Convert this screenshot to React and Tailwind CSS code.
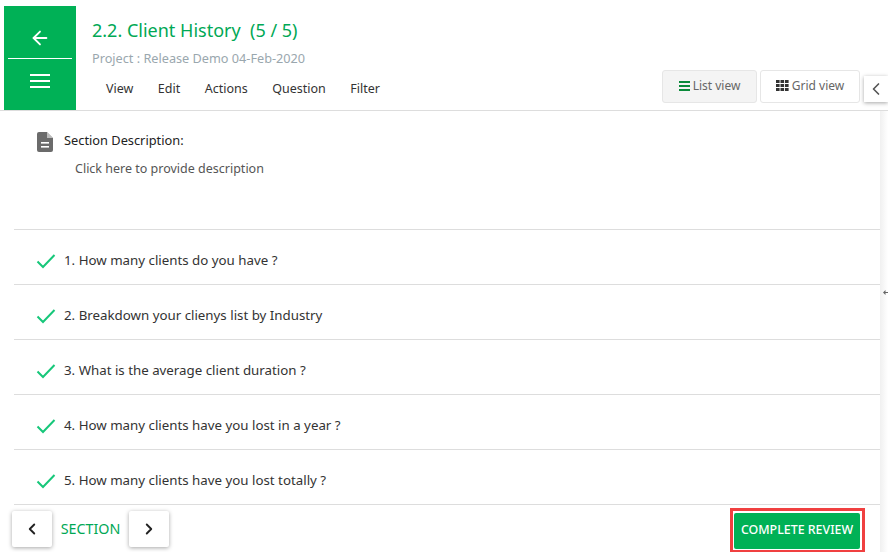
import React from 'react';
import { ArrowLeft, ChevronLeft, ChevronRight } from 'lucide-react';

const menus = ['View', 'Edit', 'Actions', 'Question', 'Filter'];
const questions = [
  '1. How many clients do you have ?',
  '2. Breakdown your clienys list by Industry',
  '3. What is the average client duration ?',
  '4. How many clients have you lost in a year ?',
  '5. How many clients have you lost totally ?',
];

function DocIcon() {
  return (
    <svg width="16" height="20" viewBox="0 0 16 20" className="mt-[2px]">
      <path d="M2 0h8l6 6v12a2 2 0 0 1-2 2H2a2 2 0 0 1-2-2V2a2 2 0 0 1 2-2z" fill="#6b6b6b" />
      <path d="M10 0v6h6z" fill="#fff" opacity="0.55" />
      <rect x="4" y="10" width="8" height="1.6" fill="#fff" />
      <rect x="4" y="14" width="8" height="1.6" fill="#fff" />
    </svg>
  );
}

function Bars({ w, h, t, color }) {
  return (
    <span className="flex flex-col justify-between" style={{ width: w, height: h }}>
      <span style={{ height: t, background: color }} />
      <span style={{ height: t, background: color }} />
      <span style={{ height: t, background: color }} />
    </span>
  );
}

function GridIcon() {
  return (
    <svg width="13" height="11" viewBox="0 0 13 11" fill="#333">
      {[0, 4, 8].map(y => [0, 4.5, 9].map(x => <rect key={`${x}-${y}`} x={x} y={y} width="3.6" height="3" />))}
    </svg>
  );
}

function Tick() {
  return (
    <svg width="20" height="16" viewBox="0 0 20 16" className="mt-[8px] shrink-0" fill="none">
      <path d="M1.5 8.5L7 14L18.5 2" stroke="#17c77a" strokeWidth="2" />
    </svg>
  );
}

export default function App() {
  return (
    <div className="w-[888px] h-[552px] bg-white overflow-hidden flex flex-col text-[#333] text-[14px]" style={{ fontFamily: '"Noto Sans", sans-serif' }}>
      <header className="h-[111px] shrink-0 border-b border-[#dddddd] flex pl-1 pt-[6px]">
        <div className="w-[72px] h-[104px] bg-[#00b156] text-white flex flex-col items-center px-1">
          <div className="h-[53px] w-full border-b border-white flex items-center justify-center pt-[12px]">
            <ArrowLeft size={22} strokeWidth={2} />
          </div>
          <div className="mt-[15px]">
            <Bars w={20} h={14} t={2} color="#fff" />
          </div>
        </div>
        <div className="flex-1 min-w-0 pl-4 flex flex-col">
          <div className="mt-[11px] h-[27px] text-[18px] leading-[27px] text-[#00a855] whitespace-pre">2.2. Client History  (5 / 5)</div>
          <div className="mt-[5px] text-[12.7px] leading-[18px] text-[#9aa7ae]">Project : Release Demo 04-Feb-2020</div>
          <nav className="mt-[12px] pl-[14px] flex gap-[24.5px] text-[12.5px] leading-[20px]">
            {menus.map(m => <span key={m}>{m}</span>)}
          </nav>
        </div>
        <div className="flex items-start pt-[64px] gap-[3px]">
          <button className="w-[95px] h-[33px] pb-[2px] bg-[#f4f4f4] border border-[#e6e6e6] rounded-[3px] flex items-center justify-center gap-[3px] text-[12px] text-[#666]">
            <Bars w={11} h={10} t={2} color="#0a8a3a" />List view
          </button>
          <button className="w-[100px] h-[33px] pb-[2px] bg-white border border-[#e6e6e6] rounded-[3px] flex items-center justify-center gap-[3px] text-[12px] text-[#666]">
            <GridIcon />Grid view
          </button>
          <button className="ml-[1px] mt-[6px] w-[24px] h-[26px] bg-white shadow-[0_1px_4px_rgba(0,0,0,0.35)] flex items-center justify-center text-[#555]">
            <ChevronLeft size={20} strokeWidth={2} />
          </button>
        </div>
      </header>

      <main className="flex-1 min-h-0 flex">
        <div className="w-[866px] ml-[14px] flex flex-col">
          <section className="h-[119px] shrink-0 border-b border-[#dddddd] pt-[19px] pl-[23px]">
            <div className="flex gap-[11px]">
              <DocIcon />
              <span className="text-[12.8px] leading-[20px] text-[#222]">Section Description:</span>
            </div>
            <div className="pl-[38px] mt-[8px] text-[12.5px] leading-[18px] text-[#555]">Click here to provide description</div>
          </section>
          {questions.map(q => (
            <div key={q} className="h-[55px] shrink-0 border-b border-[#dddddd] flex items-center pl-[22px] gap-[8px]">
              <Tick />
              <span className="text-[13.3px] text-[#333] mt-[8px]">{q}</span>
            </div>
          ))}
          <div className="flex items-start justify-between pt-[6px] -ml-[2px]">
            <div className="flex items-center">
              <button className="w-[40px] h-[36px] bg-white rounded-[2px] shadow-[0_1px_4px_rgba(0,0,0,0.35)] flex items-center justify-center text-[#222]">
                <ChevronLeft size={18} strokeWidth={2.5} />
              </button>
              <span className="w-[77px] text-center text-[14.3px] text-[#00a855]">SECTION</span>
              <button className="w-[40px] h-[36px] bg-white rounded-[2px] shadow-[0_1px_4px_rgba(0,0,0,0.35)] flex items-center justify-center text-[#222]">
                <ChevronRight size={18} strokeWidth={2.5} />
              </button>
            </div>
            <button className="mr-[15px] -mt-[3px] w-[135px] h-[45px] border-[3px] border-[#f04040] flex items-center justify-start pl-[1px]">
              <span className="w-[126px] h-[36px] pb-[1px] bg-[#00b156] rounded-[2px] text-white text-[12.4px] font-medium flex items-center justify-center whitespace-nowrap">COMPLETE REVIEW</span>
            </button>
          </div>
        </div>
        <div className="flex-1 bg-gradient-to-r from-[#f0f0f0] to-white relative">
          <svg width="6" height="5" viewBox="0 0 6 5" className="absolute left-[3px] top-[179px]">
            <path d="M0 2.5L2.5 0V2h3.5v1H2.5v2z" fill="#666" />
          </svg>
        </div>
      </main>
    </div>
  );
}
